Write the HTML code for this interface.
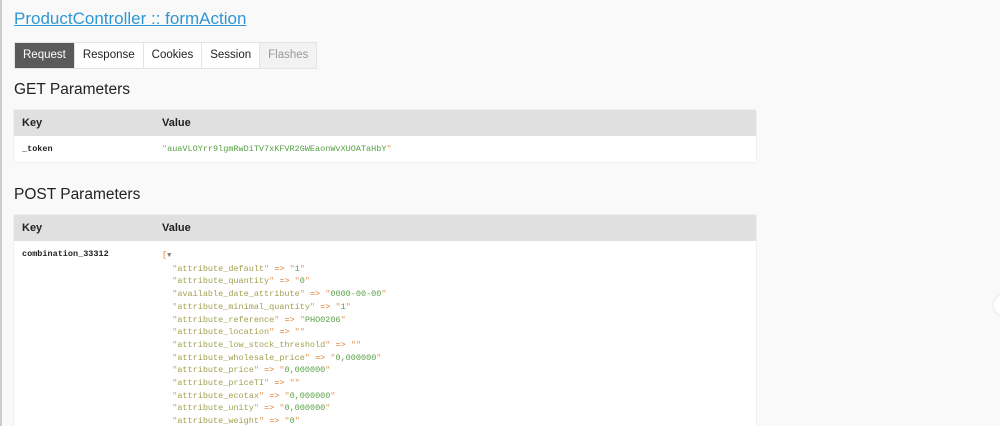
<!DOCTYPE html>
<html style="overflow:hidden"><head><meta charset="utf-8"><style>
body{margin:0;background:#f9f9f9;font-family:"Liberation Sans",sans-serif;color:#222;width:1000px;height:426px;overflow:hidden;position:relative}
.lb{position:absolute;left:0;top:0;width:2px;height:426px;background:#ccc}
h1{position:absolute;left:14px;top:9px;margin:0;font-size:17px;font-weight:normal;color:#2e97d4;text-decoration:underline}
.tabs{position:absolute;left:14px;top:42px;height:27px;display:flex;border:1px solid #e4e4e4;box-sizing:border-box}
.tabs div{font-size:11.5px;line-height:25px;padding:0 8px;background:#fff;border-right:1px solid #e4e4e4}
.tabs .a{background:#5a5a5a;color:#fff}
.tabs .d{background:#f2f2f2;color:#999;border:0}
h2{position:absolute;left:14px;margin:0;font-size:15.5px;font-weight:normal;color:#222}
table{position:absolute;left:14px;width:742px;border-collapse:collapse;background:#fff;box-shadow:0 0 1px #ccc}
th{background:#e0e0e0;text-align:left;font-size:11px;height:26px;padding:0 8px;font-weight:bold}
td{vertical-align:top;font-family:"Liberation Mono",monospace;font-size:8.5px;padding:8px 8px}
td.k{font-weight:bold;width:124px}
.s{color:#56a043}.q{color:#e69a5a}.n{color:#a1a152}.o{color:#e07a2c}
.code{line-height:12.7px;white-space:pre}
</style></head><body>
<div class="lb"></div>
<h1>ProductController :: formAction</h1>
<div class="tabs"><div class="a">Request</div><div>Response</div><div>Cookies</div><div>Session</div><div class="d">Flashes</div></div>
<h2 style="top:81px">GET Parameters</h2>
<table style="top:110px"><tr><th style="width:124px">Key</th><th>Value</th></tr>
<tr><td class="k" style="height:9px">_token</td><td><span class="q">"</span><span class="s">auaVLOYrr9lgmRwDiTV7xKFVR2GWEaonWvXUOATaHbY</span><span class="q">"</span></td></tr></table>
<h2 style="top:186px">POST Parameters</h2>
<table style="top:215px;height:230px"><tr><th style="width:124px">Key</th><th>Value</th></tr>
<tr><td class="k">combination_33312</td><td class="code"><span class="o">[</span><span style="color:#777;font-size:7px">▼</span>
  <span class="q">"</span><span class="n">attribute_default</span><span class="q">"</span> <span class="o">=&gt;</span> <span class="q">"</span><span class="s">1</span><span class="q">"</span>
  <span class="q">"</span><span class="n">attribute_quantity</span><span class="q">"</span> <span class="o">=&gt;</span> <span class="q">"</span><span class="s">0</span><span class="q">"</span>
  <span class="q">"</span><span class="n">available_date_attribute</span><span class="q">"</span> <span class="o">=&gt;</span> <span class="q">"</span><span class="s">0000-00-00</span><span class="q">"</span>
  <span class="q">"</span><span class="n">attribute_minimal_quantity</span><span class="q">"</span> <span class="o">=&gt;</span> <span class="q">"</span><span class="s">1</span><span class="q">"</span>
  <span class="q">"</span><span class="n">attribute_reference</span><span class="q">"</span> <span class="o">=&gt;</span> <span class="q">"</span><span class="s">PHO0206</span><span class="q">"</span>
  <span class="q">"</span><span class="n">attribute_location</span><span class="q">"</span> <span class="o">=&gt;</span> <span class="q">""</span>
  <span class="q">"</span><span class="n">attribute_low_stock_threshold</span><span class="q">"</span> <span class="o">=&gt;</span> <span class="q">""</span>
  <span class="q">"</span><span class="n">attribute_wholesale_price</span><span class="q">"</span> <span class="o">=&gt;</span> <span class="q">"</span><span class="s">0,000000</span><span class="q">"</span>
  <span class="q">"</span><span class="n">attribute_price</span><span class="q">"</span> <span class="o">=&gt;</span> <span class="q">"</span><span class="s">0,000000</span><span class="q">"</span>
  <span class="q">"</span><span class="n">attribute_priceTI</span><span class="q">"</span> <span class="o">=&gt;</span> <span class="q">""</span>
  <span class="q">"</span><span class="n">attribute_ecotax</span><span class="q">"</span> <span class="o">=&gt;</span> <span class="q">"</span><span class="s">0,000000</span><span class="q">"</span>
  <span class="q">"</span><span class="n">attribute_unity</span><span class="q">"</span> <span class="o">=&gt;</span> <span class="q">"</span><span class="s">0,000000</span><span class="q">"</span>
  <span class="q">"</span><span class="n">attribute_weight</span><span class="q">"</span> <span class="o">=&gt;</span> <span class="q">"</span><span class="s">0</span><span class="q">"</span></td></tr></table>
<div style="position:absolute;left:994px;top:295px;width:20px;height:20px;border-radius:50%;background:#fff;box-shadow:0 0 3px #ddd"></div>
</body></html>
